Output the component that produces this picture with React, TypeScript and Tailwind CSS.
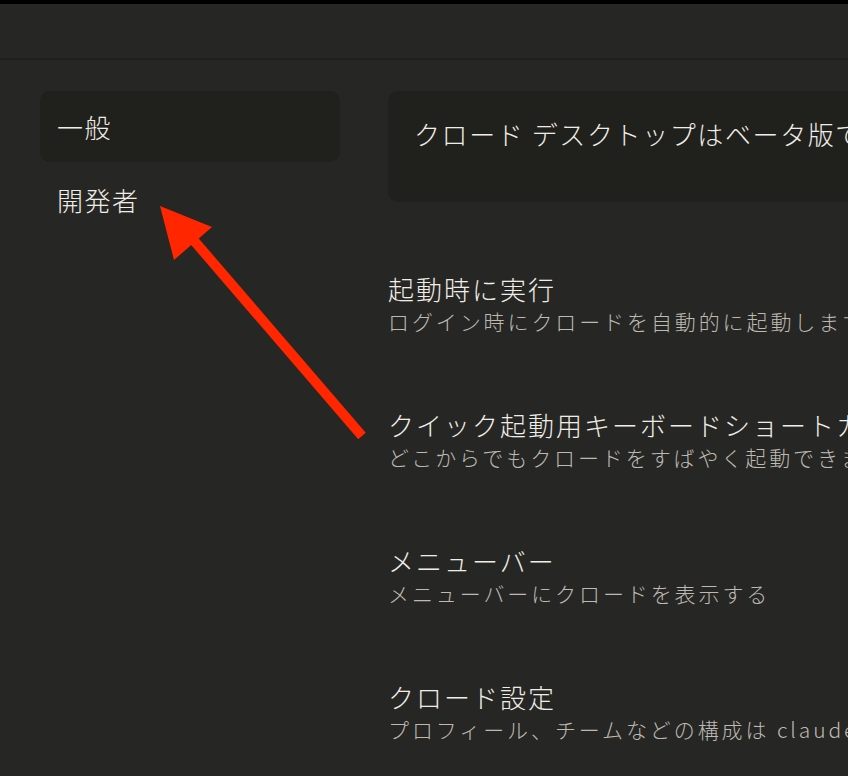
import React from "react";

const rows = [
  { t: "起動時に実行", s: "ログイン時にクロードを自動的に起動します" },
  { t: "クイック起動用キーボードショートカット", s: "どこからでもクロードをすばやく起動できます" },
  { t: "メニューバー", s: "メニューバーにクロードを表示する" },
  { t: "クロード設定", s: "プロフィール、チームなどの構成は claude.ai の設定で行います" },
];

export default function App() {
  return (
    <div
      className="relative w-[848px] h-[776px] overflow-hidden bg-[#262624] text-[#efede6] font-light"
      style={{ fontFamily: '"Noto Sans CJK JP", "Noto Sans", sans-serif' }}
    >
      <div className="h-[4px] bg-black" />
      <div className="h-[56px] border-b-2 border-[#1f1f1e]" />
      <div className="flex pt-[31px] pl-[40px] gap-[48px]">
        <div className="w-[300px] shrink-0 flex flex-col">
          <div className="h-[71px] rounded-[10px] bg-[#20201d] flex items-center px-[17px] text-[26px] leading-none tracking-[1.5px]">
            一般
          </div>
          <div className="h-[75px] flex items-center px-[17px] text-[26px] leading-none tracking-[1.5px]">
            開発者
          </div>
        </div>
        <div className="flex-1 min-w-0 flex flex-col gap-[71px]">
          <div className="h-[111px] w-[600px] rounded-l-[10px] bg-[#20201d] pl-[26px] pt-[27px] text-[26px] leading-[32px] whitespace-nowrap tracking-[1.6px]">
            クロード デスクトップはベータ版です。
          </div>
          <div className="flex flex-col gap-[72px]">
            {rows.map((r) => (
              <div key={r.t} className="whitespace-nowrap">
                <div className="text-[26px] leading-[32px] tracking-[2px] text-[#efede6]">{r.t}</div>
                <div className="text-[21px] leading-[32px] tracking-[2.9px] text-[#bdbab2]">{r.s}</div>
              </div>
            ))}
          </div>
        </div>
      </div>
      <svg
        className="absolute left-0 top-0 pointer-events-none"
        width="848"
        height="776"
        viewBox="0 0 848 776"
      >
        <line x1="362" y1="436" x2="190" y2="236" stroke="#ff2600" strokeWidth="10" />
        <polygon points="160,206 212,227 174,260" fill="#ff2600" />
      </svg>
    </div>
  );
}
